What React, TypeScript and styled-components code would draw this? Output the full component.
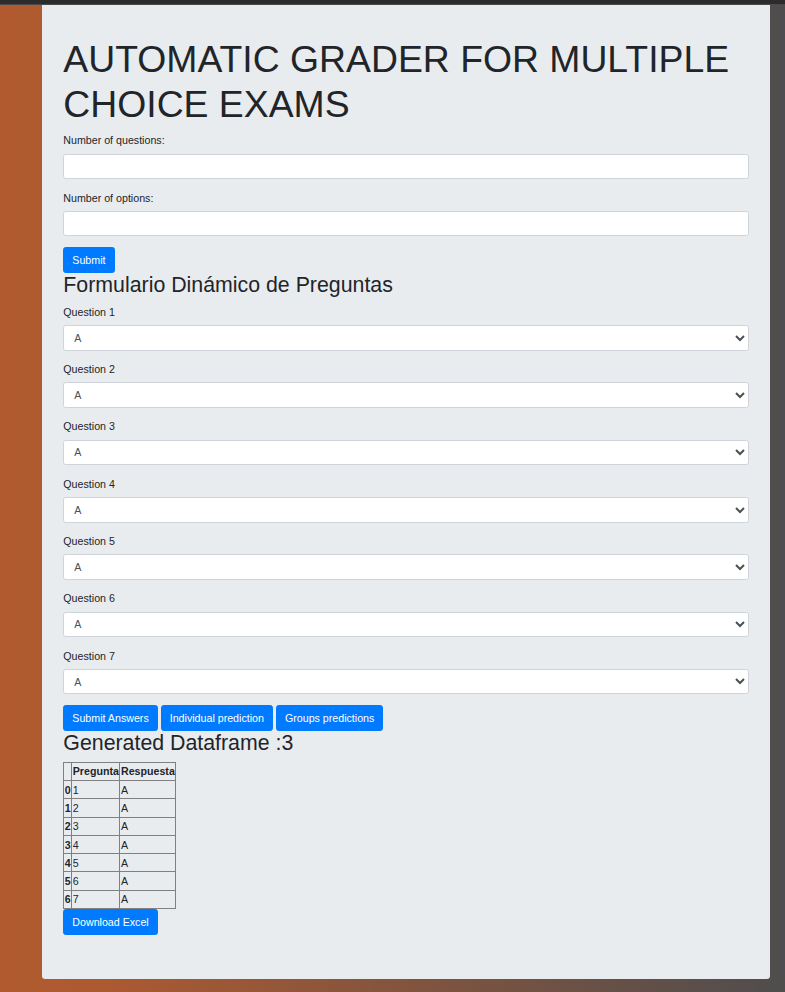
import React from "react";
import styled, { createGlobalStyle } from "styled-components";

const GlobalStyle = createGlobalStyle`
  html, body { margin: 0; padding: 0; }
  body {
    font-family: "Liberation Sans", Arial, sans-serif;
    font-size: 10.667px;
    line-height: 1.5;
    color: #212529;
  }
  * { box-sizing: border-box; }
`;

const Page = styled.div`
  min-height: 100vh;
  background: linear-gradient(90deg, #b25a2f 0%, #ad5a31 12%, #4f4d4e 100%);
  display: flex;
  flex-direction: column;
`;

const TopBar = styled.div`
  height: 5px;
  background: #2c2c2c;
  border-bottom: 1px solid #4a4a4a;
`;

const Main = styled.div`
  padding-left: 42px;
`;

const Card = styled.main`
  width: 728px;
  background: #e9ecef;
  border-radius: 0 0 3.2px 3.2px;
  padding: 32.4px 21.33px 43.5px;
`;

const Title = styled.h1`
  margin: 0 0 5.33px;
  font-size: 37.33px;
  font-weight: 300;
  line-height: 1.2;
`;

const SubTitle = styled.h2`
  margin: 0 0 5.33px;
  font-size: 21.33px;
  font-weight: 500;
  line-height: 1.2;
`;

const FormGroup = styled.div`
  margin-bottom: 10.4px;
`;

const Label = styled.label`
  display: inline-block;
  margin-bottom: 5.33px;
  font-size: 10.67px;
  line-height: 1.5;
`;

const Input = styled.input`
  display: block;
  width: 100%;
  height: 25.5px;
  padding: 4px 8px;
  font-family: inherit;
  font-size: 10.67px;
  line-height: 1.5;
  color: #495057;
  background: #fff;
  border: 1px solid #ced4da;
  border-radius: 2.67px;
  outline: none;
`;

const Select = styled.select`
  display: block;
  width: 100%;
  height: 25.6px;
  padding: 2px 6px;
  font-family: inherit;
  font-size: 10.67px;
  line-height: 1.5;
  color: #495057;
  background: #fff;
  border: 1px solid #ced4da;
  border-radius: 2.67px;
  outline: none;
`;

const Button = styled.button`
  display: inline-block;
  height: 26px;
  padding: 4px 8px;
  font-family: inherit;
  font-size: 10.67px;
  line-height: 1.5;
  color: #fff;
  background: #007bff;
  border: 1px solid #007bff;
  border-radius: 2.67px;
  cursor: pointer;
`;

const ButtonRow = styled.div`
  display: flex;
  gap: 3px;
`;

const Table = styled.table`
  border-collapse: collapse;
  font-size: 10.67px;
  line-height: 16px;
`;

const Th = styled.th<{ $align?: string }>`
  border: 1px solid #808080;
  padding: 0.65px 0.5px;
  font-weight: 700;
  text-align: ${(p) => p.$align || "left"};
`;

const Td = styled.td`
  border: 1px solid #808080;
  padding: 0.65px 0.5px;
  text-align: left;
`;

const questions = [1, 2, 3, 4, 5, 6, 7];

export default function App() {
  return (
    <>
      <GlobalStyle />
      <Page>
        <TopBar />
        <Main>
          <Card>
            <Title>AUTOMATIC GRADER FOR MULTIPLE CHOICE EXAMS</Title>
            <FormGroup>
              <Label>Number of questions:</Label>
              <Input type="text" />
            </FormGroup>
            <FormGroup>
              <Label>Number of options:</Label>
              <Input type="text" />
            </FormGroup>
            <Button>Submit</Button>
            <SubTitle>Formulario Dinámico de Preguntas</SubTitle>
            {questions.map((q) => (
              <FormGroup key={q}>
                <Label>Question {q}</Label>
                <Select defaultValue="A">
                  <option>A</option>
                  <option>B</option>
                  <option>C</option>
                  <option>D</option>
                </Select>
              </FormGroup>
            ))}
            <ButtonRow>
              <Button>Submit Answers</Button>
              <Button>Individual prediction</Button>
              <Button>Groups predictions</Button>
            </ButtonRow>
            <SubTitle>Generated Dataframe :3</SubTitle>
            <Table>
              <thead>
                <tr>
                  <Th></Th>
                  <Th $align="right">Pregunta</Th>
                  <Th $align="right">Respuesta</Th>
                </tr>
              </thead>
              <tbody>
                {questions.map((q, i) => (
                  <tr key={q}>
                    <Th>{i}</Th>
                    <Td>{q}</Td>
                    <Td>A</Td>
                  </tr>
                ))}
              </tbody>
            </Table>
            <Button>Download Excel</Button>
          </Card>
        </Main>
      </Page>
    </>
  );
}
